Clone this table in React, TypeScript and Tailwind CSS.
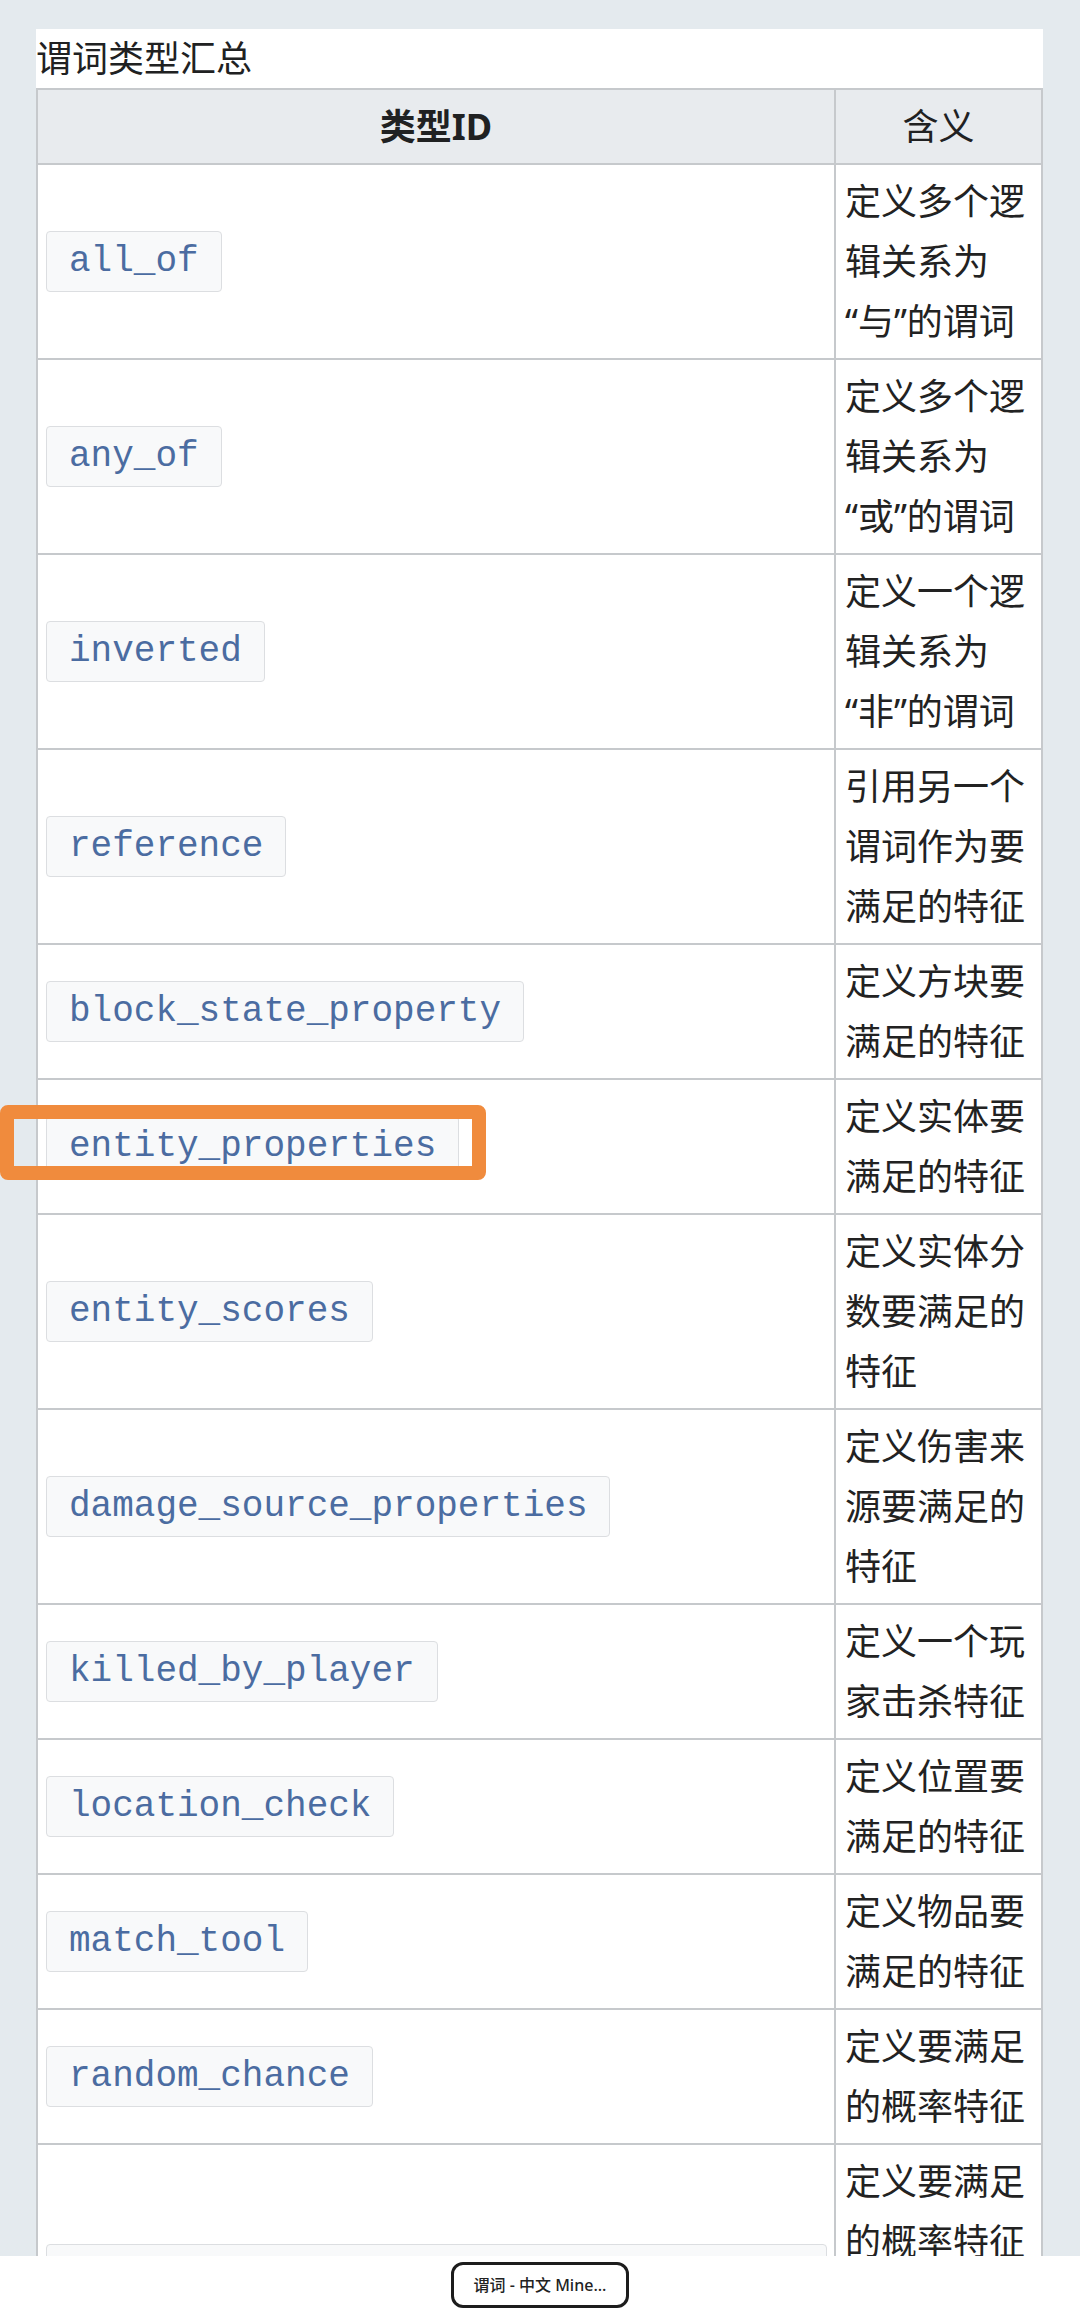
import React from "react";

const rows: { id: string; lines: string[] }[] = [
  { id: "all_of", lines: ["定义多个逻", "辑关系为", "“与”的谓词"] },
  { id: "any_of", lines: ["定义多个逻", "辑关系为", "“或”的谓词"] },
  { id: "inverted", lines: ["定义一个逻", "辑关系为", "“非”的谓词"] },
  { id: "reference", lines: ["引用另一个", "谓词作为要", "满足的特征"] },
  { id: "block_state_property", lines: ["定义方块要", "满足的特征"] },
  { id: "entity_properties", lines: ["定义实体要", "满足的特征"] },
  { id: "entity_scores", lines: ["定义实体分", "数要满足的", "特征"] },
  { id: "damage_source_properties", lines: ["定义伤害来", "源要满足的", "特征"] },
  { id: "killed_by_player", lines: ["定义一个玩", "家击杀特征"] },
  { id: "location_check", lines: ["定义位置要", "满足的特征"] },
  { id: "match_tool", lines: ["定义物品要", "满足的特征"] },
  { id: "random_chance", lines: ["定义要满足", "的概率特征"] },
  {
    id: "random_chance_with_enchanted_bonus",
    lines: ["定义要满足", "的概率特征", "，受魔咒等", "级影响"],
  },
];

const cjk = { fontFamily: '"Noto Sans", "Noto Sans CJK SC", sans-serif' };
const mono = { fontFamily: '"Liberation Mono", "Courier New", monospace' };

export default function App() {
  return (
    <div className="relative w-[1080px] h-[2314px] overflow-hidden bg-[#e4eaee]">
      <div className="pt-[29px] pl-[36px]">
        <div className="w-[1007px] bg-white text-[#202122]" style={cjk}>
          <div className="text-[36px] leading-[59px] whitespace-nowrap">谓词类型汇总</div>
          <div className="border-t-2 border-l-2 border-r-2 border-[#c6c9cc]">
            <div className="grid grid-cols-[798px_1fr] h-[75px] border-b-2 border-[#c6c9cc] bg-[#e8ebee] text-[36px] leading-[60px]">
              <div className="flex items-center justify-center border-r-2 border-[#c6c9cc] font-bold">
                类型ID
              </div>
              <div className="flex items-center justify-center">含义</div>
            </div>
            {rows.map((r, idx) => (
              <div
                key={r.id}
                className="grid grid-cols-[798px_1fr] border-b-2 border-[#c6c9cc]"
              >
                <div className="flex items-center pl-[8px] border-r-2 border-[#c6c9cc]">
                  <span
                    className="inline-block border border-[#dcdee1] bg-[#f8f9fa] rounded-[4px] px-[22px] py-[9px] text-[36px] leading-[41px] text-[#4b6ca1] whitespace-nowrap"
                    style={mono}
                  >
                    {r.id}
                  </span>
                </div>
                <div
                  className={
                    idx === rows.length - 1
                      ? "pl-[9px] pt-[7px] pb-[12px] text-[36px] leading-[60px] text-[#222222]"
                      : "pl-[9px] pt-[7px] pb-[6px] text-[36px] leading-[60px] text-[#222222]"
                  }
                >
                  {r.lines.map((l, i) => (
                    <div key={i} className="whitespace-nowrap">
                      {l}
                    </div>
                  ))}
                </div>
              </div>
            ))}
          </div>
        </div>
      </div>

      {/* orange annotation */}
      <div className="absolute left-0 top-[1105px] w-[486px] h-[75px] border-[14px] border-[#f08b3d] rounded-[8px]" />

      {/* bottom bar */}
      <div className="absolute left-0 right-0 bottom-0 h-[58px] bg-white flex items-center justify-center">
        <div
          className="w-[178px] h-[46px] border-[3px] border-[#1c1c1c] rounded-[12px] flex items-center justify-center text-[16px] font-medium text-[#222] whitespace-nowrap"
          style={cjk}
        >
          谓词 - 中文 Mine...
        </div>
      </div>
    </div>
  );
}
